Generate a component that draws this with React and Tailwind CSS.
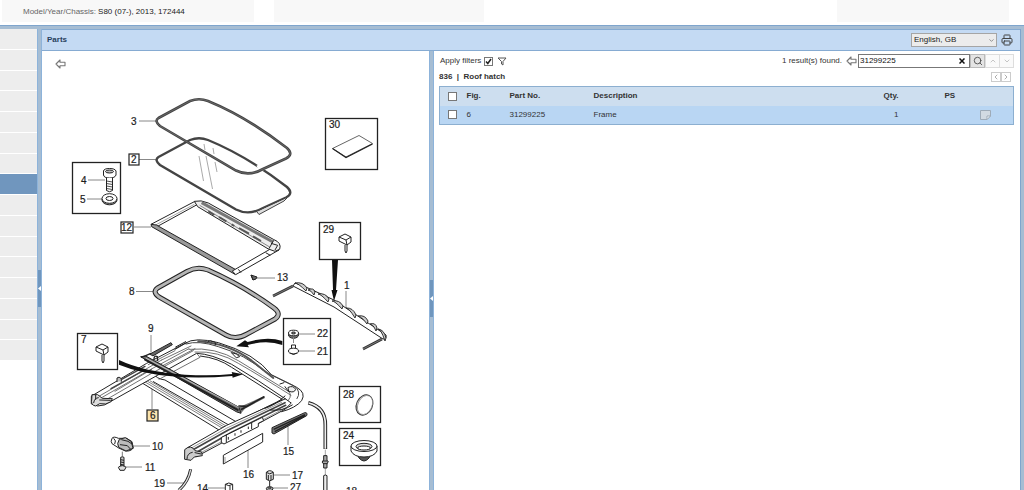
import React, { useState } from "react";
import { Printer, Search, ChevronUp, ChevronDown, ChevronLeft, ChevronRight } from "lucide-react";

const sidebarRows = Array.from({ length: 16 }, (_, i) => i);

function ArrowLeftOutline() {
  return (
    <svg viewBox="0 0 22 20" className="h-[10px] w-[11px]" fill="#fff" stroke="#777" strokeWidth="2.2" strokeLinejoin="round" aria-hidden="true">
      <path d="M2 10 L10 2 V6.5 H20 V13.5 H10 V18 Z" />
    </svg>
  );
}

function Splitter({ handleClass }) {
  return (
    <div className="w-[5px] shrink-0 border-x border-[#8db3da] bg-[#a6bdd3]">
      <button type="button" aria-label="Collapse panel" className={"flex h-[37px] w-full items-center justify-center bg-[#7096bd] " + handleClass}>
        <svg viewBox="0 0 3 5" className="h-[5px] w-[3px]" fill="#fff" aria-hidden="true">
          <path d="M0 2.5 L3 0 V5 Z" />
        </svg>
      </button>
    </div>
  );
}

const labels = [
  ["3", 131, 125], ["4", 81, 184], ["5", 80, 203], ["30", 329, 128], ["29", 323, 233],
  ["13", 277, 281], ["1", 344, 289], ["8", 129, 295], ["22", 317, 337], ["21", 317, 355],
  ["9", 148, 332], ["7", 81, 343], ["10", 152, 450], ["11", 145, 471], ["19", 154, 487],
  ["14", 197, 492], ["15", 283, 455], ["16", 243, 478], ["17", 292, 479], ["27", 290, 491],
  ["28", 343, 398], ["24", 343, 439], ["18", 346, 495],
];

const boxes = [
  [72, 162, 49, 52], [325, 118, 53, 52], [319, 222, 42, 38], [283, 318, 48, 47],
  [77, 333, 41, 37], [339, 386, 42, 37], [339, 428, 42, 38],
];

const leaders = [
  "M139 121H157", "M139 159.500H157", "M88 180H105", "M87 199H103", "M134 227H151",
  "M136 291.5H154", "M257 278H275", "M346 291V308", "M297 334H315", "M297 351H315",
  "M151 335V352", "M152 385V409", "M131 446H150", "M124 467H142", "M167 483H186",
  "M208 488H225", "M288 426V445", "M248 450V468", "M274 475H290", "M273 488H288",
];

const ring = "M158.5 118 L190 101 Q199 97.5 208 101 Q247 117 287 148 Q294 154.500 286 158.500 L263 169 Q249 177 236 170.500 L160 126 Q154 121 158.500 118 Z";

const bumps = [
  [295, 283, 307, 288], [308, 290, 315, 292], [318, 294, 329, 299], [332, 301, 343, 306],
  [346, 308, 356, 315], [358, 316, 368, 321], [370, 324, 377, 328], [378, 329, 386, 338],
];

function Clip({ transform }) {
  return (
    <g transform={transform} stroke="#222" strokeWidth="1" fill="#fff" strokeLinejoin="round">
      <path d="M-6 -3 L0 -6 L6 -3 L6 2 L2 5 L-6 1 Z" />
      <path d="M-6 -3 L1 0 L6 -3 M1 0 L2 5" fill="none" />
      <path d="M0 5 V11 L1 13 L2 11 V5" />
    </g>
  );
}

function Frame() {
  return (
    <g transform="translate(85 330) scale(.3333)" fill="none" stroke="#222" strokeWidth="3" strokeLinejoin="round" strokeLinecap="round">
      {/* rear cross member */}
      <path d="M165 155 L410 305 L458 278 L240 150 Q212 146 208 132 Z" fill="#fff" />
      <path d="M205 155 L440 290" />
      <path d="M177 154 L418 298 M188 154 L424 295 M196 153 L430 292" stroke="#666" strokeWidth="2.500" />

      {/* left rail and front arch */}
      <path d="M20 198 L185 100 L300 40 Q330 20 400 38 Q510 70 560 135 L635 172 Q664 188 650 212 Q632 234 590 245 L555 240 L603 208 Q520 150 440 103 Q380 72 335 70 L76 215 Q60 228 38 228 L20 222 Z" fill="#fff" />
      <path d="M303 42 Q340 30 400 50 Q480 74 540 125 L628 168 Q650 185 636 206" stroke="#444" />
      <path d="M340 34 Q430 40 500 92 L565 144" strokeWidth="6" stroke="#555" />
      <path d="M312 58 Q390 50 460 92 Q530 135 612 185 Q625 200 600 222" stroke="#555" strokeWidth="2.500" />
      <path d="M330 66 Q400 62 460 100 Q530 140 618 196" stroke="#555" strokeWidth="2.500" />
      <path d="M346 78 Q400 84 440 112 L592 208 L470 268" />
      <path d="M50 203 L190 122 L312 56 M62 210 L200 130 L325 62 M90 184 L200 118 M40 200 L230 90" stroke="#555" strokeWidth="2.500" />
      <path d="M190 104 L270 62 M230 90 L318 48 M235 106 L330 56 M335 70 L345 82 L222 148" stroke="#555" strokeWidth="2.500" />
      <path d="M270 58 L305 38 M272 51 L302 35 M368 36 l8 -4 l15 5 v8 M440 68 l14 4 l10 8 l-9 3 z" />
      <path d="M610 172 Q625 165 632 178 Q628 190 612 184 Z M585 162 l12 -4 M600 170 l10 14" fill="#eee" />
      <path d="M96 155 V144 Q102 138 109 146 V154" fill="#bbb" />
      <path d="M22 194 H38 L52 205 L82 206 L78 215 L62 222 L44 221 L32 228 Q16 226 20 208 Z" fill="#ddd" />
      <path d="M26 218 Q28 204 40 203 M44 210 L76 211 M32 196 V208" />
      <path d="M78 176 L176 121 M110 148 L180 109" strokeWidth="4" stroke="#444" />

      {/* right rail */}
      <path d="M600 207 L425 286 L306 354 L304 378 L334 380 L600 238 L618 220 Z" fill="#fff" />
      <path d="M312 366 L430 300 L600 218 M326 372 L440 307 L602 226" strokeWidth="5" stroke="#444" />
      <path d="M316 356 L426 294 L590 217 M340 372 L604 232" stroke="#666" strokeWidth="2" />
      <path d="M300 358 Q318 342 330 362 L350 366 L352 377 L328 381 L318 391 L300 388 Z" fill="#ccc" />
      <path d="M306 386 Q306 370 322 367 M330 368 L348 372" />
      <path d="M410 322 L532 262 L536 272 L520 280 L520 290 L417 342 L410 338 Z" fill="#fff" />
      <path d="M430 322 v6 M450 311 v5 M468 302 v5 M490 291 v5 M424 315 V336 M500 280 v16" />
      <path d="M540 235 Q570 226 600 198 M556 240 Q592 245 622 225" />

      {/* sun blind rail */}
      <path d="M168 80 L182 78 L462 232 L538 198 L540 204 L480 236 L468 250 L456 246 Z" fill="#777" stroke="none" />
      <path d="M168 80 L182 78 L462 232 L468 250 L456 246 Z" fill="#777" />
      <path d="M180 89 L458 240" strokeWidth="6" />
      <path d="M184 85 L460 232" stroke="#ddd" strokeWidth="2" />
      <path d="M470 238 L536 201 M462 228 L486 229" strokeWidth="5" />
      <path d="M195 72 L258 38 L262 44 L205 77 Z" fill="#666" />
      <path d="M170 82 L198 70 M207 88 Q207 75 217 80 L218 92" strokeWidth="4" />

      {/* locating arrows */}
      <path d="M102 90 Q178 126 300 134 Q380 139 442 132 L440 126 L474 133 L443 143 L442 138 Q340 147 260 139 Q165 130 102 104 Z" fill="#111" stroke="none" />
      <path d="M592 33 Q548 18 488 36 L480 31 L454 49 L492 52 L488 45 Q546 29 592 45 Z" fill="#111" stroke="none" />
    </g>
  );
}

function Diagram() {
  return (
    <svg viewBox="42 51 388 439" className="absolute left-0 top-0 h-[439px] w-[388px]" role="img" aria-label="Roof hatch exploded view">
      {leaders.map((d) => (
        <path key={d} d={d} stroke="#888" strokeWidth="1" fill="none" />
      ))}

      {/* glass panel and seal */}
      <path d={ring} transform="translate(0 39)" fill="none" stroke="#444" strokeWidth="2.4" />
      <path d="M257 212 L259 214.500 L284 201 L287 198" fill="#ddd" stroke="#444" />
      <path d="M199 156 L203.500 181 M206 156 L212.500 189 M204 144 L205 150 M213 148 L214 154 M215 162 L217 172" stroke="#aaa" fill="none" />
      <path d="M258 169 L264 166" stroke="#fff" strokeWidth="7" />
      <path d={ring} fill="none" stroke="#444" strokeWidth="2.600" />
      <path d={ring} fill="none" stroke="#888" strokeWidth=".5" />

      {/* inner frame */}
      <g transform="translate(145 190) scale(.3333)" fill="#fff" stroke="#222" strokeWidth="3" strokeLinejoin="round">
        <path d="M18 103 L148 35 L160 42 L36 110 Z" />
        <path d="M30 106 L148 43" stroke="#777" strokeWidth="2" />
        <path d="M18 103 L34 105 L276 241 L270 253 L20 110 Z" fill="#999" />
        <path d="M262 243 L378 176 L402 180 L272 254 Z" />
        <path d="M280 238 l8 10 M362 188 l14 8" />
        <path d="M148 34 Q168 29 190 39 L385 148 Q411 158 404 178 L390 184 L370 177 L158 50 Z" fill="#eee" />
        <path d="M170 38 L384 156" strokeWidth="9" stroke="#777" />
        <path d="M164 46 L374 171" stroke="#555" strokeWidth="2" />
        <path d="M190 64 l18 11 M222 81 l22 13 M260 103 l8 5 M282 114 l30 17 M324 139 l24 14" strokeWidth="6" stroke="#555" />
        <path d="M378 160 L398 166 L390 180 M386 151 L372 176" fill="none" />
      </g>

      {/* inner seal */}
      <path d="M157.500 288 L187 271.500 Q197 266 208 270 Q244 286 274 308 Q282 314 275 319 L247 334 Q236 340.500 226 335 L159 297 Q152 292 157.500 288 Z" fill="none" stroke="#222" strokeWidth="5" />
      <path d="M157.500 288 L187 271.500 Q197 266 208 270 Q244 286 274 308 Q282 314 275 319 L247 334 Q236 340.500 226 335 L159 297 Q152 292 157.500 288 Z" fill="none" stroke="#b5b5b5" strokeWidth="3" />

      {/* wind deflector */}
      <path d="M273 296 L293 286 M363 349 L382 339" stroke="#333" strokeWidth="2.600" />
      <path d="M273 296 L293 286 M363 349 L382 339" stroke="#aaa" strokeWidth=".6" />
      <path d="M293 286 L295 283 L308 288 L334 300 L386 335 Q387 339 383 339 L334 307 Z" fill="#fff" stroke="#222" />
      {bumps.map(([x1, y1, x2, y2]) => (
        <path key={x1} d={`M${x1} ${y1} Q${(x1 + x2) / 2 + 2} ${(y1 + y2) / 2 - 4} ${x2} ${y2} L${x2 - 1} ${y2 + 3} Q${x1 + 3} ${y1} ${x1} ${y1} Z`} fill="#ccc" stroke="#222" strokeWidth=".9" />
      ))}
      <path d="M332 260 L338 260 L336 290 L337.500 290 L334 301 L331.500 290 L333 290 Z" fill="#111" />

      <Frame />

      {boxes.map(([x, y, w, h]) => (
        <rect key={`${x}-${y}`} x={x + 0.5} y={y + 0.5} width={w - 1} height={h - 1} fill="none" stroke="#222" strokeWidth="1.3" />
      ))}

      {/* bolt and washer */}
      <g fill="#fff" stroke="#222" strokeWidth="1">
        <path d="M103.500 171 Q104 168.500 109.500 168.500 Q115 168.500 116 171 V175 Q115 178 109.500 178 Q104 178 103.500 175 Z" />
        <ellipse cx="109.500" cy="171.500" rx="4" ry="1.500" fill="#bbb" />
        <path d="M106.500 178 V190.500 Q109.500 193 112.500 190.500 V178" />
        <path d="M106.500 181 L112.500 182 M106.500 183.500 L112.500 184.500 M106.500 186 L112.500 187 M106.500 188.500 L112.500 189.500" strokeWidth=".8" />
        <ellipse cx="109.500" cy="200" rx="7.500" ry="4.800" fill="#999" />
        <ellipse cx="109.500" cy="198.500" rx="7.500" ry="4.800" />
        <ellipse cx="109.500" cy="198.500" rx="3.500" ry="2" />
      </g>

      <path d="M332.500 148.500 L359 135.500 L372.500 143.500 L346 157 Z" fill="#fff" stroke="#666" />
      <path d="M332.500 148.500 L346 157.500 L372.500 144" fill="none" stroke="#222" strokeWidth="1.200" />
      <Clip transform="translate(345 240)" />
      <Clip transform="translate(102 350)" />

      <path d="M251 275 L257 277 L256 279 L253 280 Z M251 275 L253 280" fill="#666" stroke="#222" />

      {/* nut and plug */}
      <g fill="#fff" stroke="#222">
        <ellipse cx="293.500" cy="335" rx="5" ry="3.300" fill="#777" />
        <ellipse cx="293.500" cy="333" rx="5" ry="2.800" />
        <ellipse cx="293.500" cy="333" rx="2" ry="1" fill="#888" />
        <path d="M293.500 337 V343" stroke="#888" />
        <path d="M291.500 350 V345 H295.500 V350" />
        <ellipse cx="293.500" cy="351" rx="5" ry="2.800" />
        <path d="M290.500 353 Q293.500 356 296.500 353" fill="#777" />
      </g>

      <ellipse cx="364.500" cy="405" rx="8" ry="10.500" transform="rotate(25 364.500 405)" fill="#ddd" stroke="#333" />
      <ellipse cx="365" cy="405" rx="7" ry="10" transform="rotate(25 365 405)" fill="#fff" stroke="#777" strokeWidth=".6" />

      <g fill="#fff" stroke="#222">
        <path d="M357 454 L359 458 Q364 464 369 458 L371 454 Z" fill="#555" />
        <path d="M351 446 V451 Q354 457 364 457 Q374 457 377 451 V446" />
        <ellipse cx="364" cy="446" rx="13" ry="5.500" />
        <ellipse cx="364" cy="446.500" rx="8" ry="3.200" fill="#ddd" />
        <ellipse cx="364" cy="448" rx="6.500" ry="2" />
      </g>

      {/* drain motor and screw */}
      <g transform="translate(70 325) scale(.3333)" fill="#fff" stroke="#222" strokeWidth="3" strokeLinejoin="round">
        <path d="M126 340 Q131 333 145 340 L170 340 L186 350 L190 369 Q182 380 166 378 L146 369 L126 356 Q121 350 126 340 Z" />
        <path d="M148 343 L166 338 L184 350 L189 370 L168 378 L146 367 Q139 356 148 343 Z" fill="#bbb" />
        <path d="M131 340 Q140 347 134 357 M154 344 L174 349 L186 357 M150 359 L172 362 L183 374" fill="none" />
        <path d="M157 380 V395" stroke="#777" />
        <path d="M152 397 Q157 394 162 397 V424 H152 Z M152 404 l10 2 M152 411 l10 2 M152 418 l10 2" fill="#ccc" />
        <path d="M145 427 Q157 417 168 427 L163 436 H150 Z" fill="#ddd" />
        <path d="M362 433 Q354 473 326 496" fill="none" strokeWidth="9" />
        <path d="M362 434 Q354 473 326 496" fill="none" stroke="#ddd" strokeWidth="4" />
        <path d="M466 478 Q476 470 488 478 V500 H466 Z" />
        <path d="M466 478 Q476 486 488 478 M480 483 V500" fill="none" />
      </g>

      {/* trim strips and drain hose */}
      <g transform="translate(220 325) scale(.3333)" fill="#fff" stroke="#222" strokeWidth="3" strokeLinejoin="round">
        <path d="M10 391 L128 325 V351 L10 417 Z" />
        <path d="M15 396 V412" stroke="#999" />
        <path d="M156 308 L254 263 Q264 262 260 272 L162 327 L156 324 Z" fill="#777" />
        <path d="M161 313 L255 269 M164 320 L256 272" strokeWidth="4" fill="none" />
        <path d="M265 233 Q317 247 316 300 V372" fill="none" strokeWidth="11" />
        <path d="M266 234 Q317 247 316 300 V371" fill="none" stroke="#eee" strokeWidth="5" />
        <path d="M316 374 V450" stroke="#777" strokeWidth="2" />
        <path d="M311 392 H321 V406 L325 410 L321 416 V429 H311 V417 L306 411 L311 406 Z" fill="#aaa" />
        <path d="M307 408 H324 M309 416 H323" />
        <path d="M311 500 V452 Q316 448 321 452 V500" fill="#eee" />
        <path d="M139 442 Q149 432 160 442 V463 Q149 472 139 463 Z" fill="#ddd" />
        <path d="M139 442 Q149 451 160 442 M145 450 V465 M153 450 V465 M149 468 V485" fill="none" />
        <ellipse cx="149" cy="491" rx="10" ry="6" fill="#aaa" />
        <ellipse cx="149" cy="489" rx="4" ry="2" />
      </g>

      <g fill="#fff" stroke="#222" strokeWidth="1.200">
        <rect x="129" y="154" width="10" height="11" />
        <rect x="121" y="222" width="12" height="11" />
        <rect x="147" y="410" width="11" height="11" fill="#fbe3ad" />
      </g>
      <g className="font-['Liberation_Sans',sans-serif] text-[10px]" fill="#1c1c1c" stroke="#1c1c1c" strokeWidth=".2">
        {labels.map(([t, x, y]) => (
          <text key={t} x={x} y={y}>{t}</text>
        ))}
        <text x="131" y="163">2</text>
        <text x="121" y="231">12</text>
        <text x="150" y="419">6</text>
      </g>
    </svg>
  );
}

function Tick({ checked, label, id }) {
  return (
    <span className="relative inline-flex size-[9px] align-middle">
      <input
        id={id}
        type="checkbox"
        defaultChecked={checked}
        aria-label={label}
        className="peer size-[9px] appearance-none border border-[#777] bg-white"
      />
      <svg viewBox="0 0 9 9" className="pointer-events-none absolute inset-0 hidden size-[9px] peer-checked:block" fill="none" stroke="#222" strokeWidth="1.5" aria-hidden="true">
        <path d="M2 4.500 L3.800 6.500 L7 2" />
      </svg>
    </span>
  );
}

export default function App() {
  const [query, setQuery] = useState("31299225");
  return (
    <div className="flex h-screen flex-col overflow-hidden bg-white font-['Liberation_Sans',sans-serif] text-[8px] leading-[12px] text-[#333]">
      <header className="flex h-[25px] shrink-0 items-start bg-white">
        <div className="ml-[2px] flex h-[22px] w-[252px] items-center gap-[2px] bg-[#f8f8f8] pl-[21px] pt-[2px]">
          <span className="text-[#666]">Model/Year/Chassis:</span>
          <span className="text-[#222]">S80 (07-), 2013, 172444</span>
        </div>
        <div className="ml-[20px] h-[22px] w-[210px] bg-[#f8f8f8]" />
        <div className="ml-auto mr-[15px] h-[22px] w-[172px] bg-[#f8f8f8]" />
      </header>

      <div className="flex min-h-0 flex-1 border-t border-[#7fa5cd] bg-[#a6bdd3] pt-[3px]">
        <nav aria-label="Sections" className="w-[37px] shrink-0 bg-white">
          <ul className="grid h-[332px] auto-rows-fr">
            {sidebarRows.map((i) => (
              <li key={i} className={i === 7 ? "border-b border-white bg-[#7096be]" : "border-b border-white bg-[#ededed]"} />
            ))}
          </ul>
        </nav>
        <Splitter handleClass="mt-[241px]" />

        <main className="flex min-w-0 flex-1 flex-col">
          <div className="flex h-[22px] shrink-0 items-center border-y border-[#86abd2] bg-[#c4daf3] pl-[5px] pr-[7px]">
            <h1 className="font-bold text-[#27405c]">Parts</h1>
            <div className="relative ml-auto">
              <select aria-label="Language" className="block h-[14px] w-[86px] appearance-none border border-[#a5a5a5] bg-[#ececec] pl-[2px] text-[8px] leading-[12px] text-[#222]">
                <option>English, GB</option>
              </select>
              <ChevronDown className="pointer-events-none absolute right-[2px] top-[4px] size-[7px] text-[#555]" />
            </div>
            <button type="button" aria-label="Print" className="ml-[4px]">
              <Printer className="size-[12px] text-[#444]" />
            </button>
          </div>

          <div className="flex min-h-0 flex-1">
            <section aria-label="Illustration" className="relative w-[387px] shrink-0 overflow-hidden bg-white">
              <Diagram />
              <button type="button" aria-label="Back" className="relative ml-[13px] mt-[8px] block">
                <ArrowLeftOutline />
              </button>
            </section>
            <Splitter handleClass="mt-[229px]" />

            <section aria-label="Parts list" className="min-w-0 flex-1 bg-white pl-[5px] pr-[6px] pt-[2px]">
              <div className="flex h-[16px] items-center">
                <label htmlFor="apply-filters" className="pl-px">Apply filters</label>
                <span className="ml-[3px] flex"><Tick id="apply-filters" checked /></span>
                <button type="button" aria-label="Filter" className="ml-[4px]">
                  <svg viewBox="0 0 10 9" className="h-[9px] w-[10px]" fill="#fff" stroke="#555" strokeLinejoin="round" aria-hidden="true">
                    <path d="M1 1 H9 L6 4.500 V8 L4.500 7 V4.500 Z" />
                  </svg>
                </button>
                <span className="ml-auto">1 result(s) found.</span>
                <button type="button" aria-label="Previous search" className="ml-[4px]"><ArrowLeftOutline /></button>
                <div className="ml-px flex h-[14px] w-[112px] items-center border border-[#777] bg-white pr-[4px]">
                  <input
                    aria-label="Search parts"
                    value={query}
                    onChange={(e) => setQuery(e.target.value)}
                    className="h-[12px] min-w-0 flex-1 pl-px text-[8px] text-[#111] outline-none"
                  />
                  <button type="button" aria-label="Clear" onClick={() => setQuery("")}>
                    <svg viewBox="0 0 6 6" className="size-[6px]" stroke="#111" strokeWidth="1.500" aria-hidden="true">
                      <path d="M.5 .5 L5.500 5.500 M5.500 .5 L.5 5.500" />
                    </svg>
                  </button>
                </div>
                <button type="button" aria-label="Search" className="flex h-[14px] w-[15px] items-center justify-center border border-[#bbb] bg-[#e4e4e4]">
                  <Search className="size-[10px] text-[#444]" />
                </button>
                <button type="button" aria-label="Previous result" className="flex h-[14px] w-[15px] items-center justify-center border border-[#ddd] bg-[#fafafa]">
                  <ChevronUp className="size-[8px] text-[#aaa]" />
                </button>
                <button type="button" aria-label="Next result" className="-ml-px flex h-[14px] w-[15px] items-center justify-center border border-[#ddd] bg-[#fafafa]">
                  <ChevronDown className="size-[8px] text-[#aaa]" />
                </button>
              </div>

              <div className="flex h-[15px] items-center">
                <h2 className="font-bold text-[#333]">836 &nbsp;|&nbsp; Roof hatch</h2>
                <div className="ml-auto mr-[3px] flex">
                  <button type="button" aria-label="Previous page" className="flex size-[10px] items-center justify-center border border-[#ccc]">
                    <ChevronLeft className="size-[8px] text-[#888]" />
                  </button>
                  <button type="button" aria-label="Next page" className="flex size-[10px] items-center justify-center border border-[#ccc]">
                    <ChevronRight className="size-[8px] text-[#888]" />
                  </button>
                </div>
              </div>

              <table className="mt-[2px] w-full table-fixed border-collapse border border-[#8cafd0] text-left text-[#333]">
                <colgroup>
                  <col className="w-[27px]" />
                  <col className="w-[43px]" />
                  <col className="w-[84px]" />
                  <col />
                  <col className="w-[90px]" />
                  <col className="w-[35px]" />
                  <col className="w-[34px]" />
                </colgroup>
                <thead>
                  <tr className="h-[19px] bg-[#cddeef]">
                    <th className="pl-[8px] leading-none"><Tick label="Select all" /></th>
                    <th>Fig.</th>
                    <th>Part No.</th>
                    <th>Description</th>
                    <th className="pr-[46px] text-right">Qty.</th>
                    <th>PS</th>
                    <th aria-label="Notes" />
                  </tr>
                </thead>
                <tbody>
                  <tr className="h-[19px] bg-[#b9d6f3]">
                    <td className="pl-[8px] leading-none"><Tick label="Select Frame" /></td>
                    <td>6</td>
                    <td>31299225</td>
                    <td>Frame</td>
                    <td className="pr-[46px] text-right">1</td>
                    <td />
                    <td className="leading-none">
                      <button type="button" aria-label="Add note" className="block">
                        <svg viewBox="0 0 11 10" className="h-[10px] w-[11px]" fill="#d2dae2" stroke="#9eabb8" aria-hidden="true">
                          <path d="M.5 .5 H10.500 V6 L7 9.500 H.5 Z" />
                          <path d="M10.500 6 H7 V9.500 Z" fill="#fff" />
                        </svg>
                      </button>
                    </td>
                  </tr>
                </tbody>
              </table>
            </section>
          </div>
        </main>
        <div className="w-[4px] shrink-0 border-l border-[#7fa5cd]" />
      </div>
    </div>
  );
}
